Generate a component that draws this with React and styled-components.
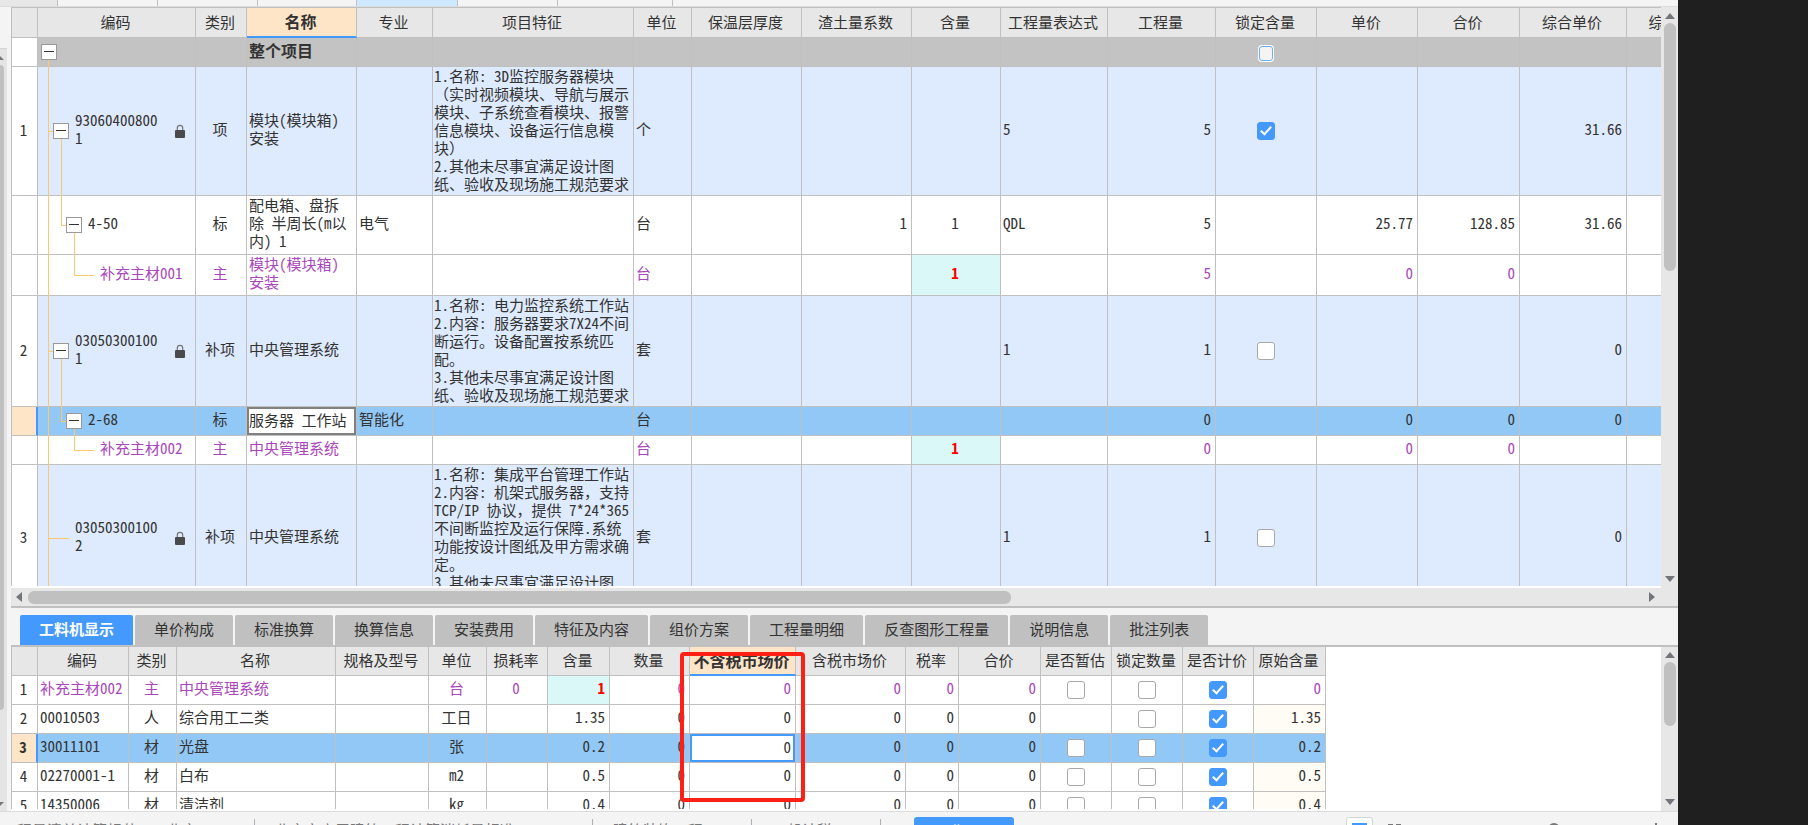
import React from "react";
import styled, { createGlobalStyle, css } from "styled-components";

const color = {
  line: "#c0c0c0",
  head: "#e7e7e7",
  panel: "#f4f4f4",
  accent: "#4499ff",
  selected: "#92c8f6",
  item: "#deeafd",
  peach: "#ffe5c7",
  purple: "#aa46bb",
  tree: "#ffc670",
};

const Global = createGlobalStyle`
  *, *::before, *::after { box-sizing: border-box; }
  body {
    margin: 0;
    background: #1f1f1f;
    color: #333;
    font: 15px/18px "Noto Sans CJK SC", sans-serif;
    font-feature-settings: "hwid" 1;
  }
  button, input { font: inherit; color: inherit; font-feature-settings: inherit; }
`;

const App = styled.div`
  display: flex;
  height: 100vh;
  overflow: hidden;
`;
const Backdrop = styled.aside`
  flex: 0 0 130px;
  background: #1f1f1f;
`;
const Window = styled.main`
  flex: 1;
  min-width: 0;
  display: flex;
  flex-direction: column;
  background: ${color.panel};
`;
const Body = styled.div`
  flex: 1;
  min-height: 0;
  display: flex;
`;
const Workspace = styled.div`
  flex: 1;
  min-width: 0;
  display: flex;
  flex-direction: column;
`;

const TopStrip = styled.div`
  display: flex;
  flex: 0 0 7px;
  border-bottom: 1px solid #dcdcdc;
`;
const TopTab = styled.span`
  width: ${(p) => p.$w}px;
  border-right: 1px solid ${color.line};
  background: ${(p) => p.$bg || color.panel};
`;

const SideRail = styled.div`
  flex: 0 0 11px;
  display: flex;
  flex-direction: column;
  margin-top: 1px;
  border-right: 4px solid ${color.panel};
  background: #e4e4e4;
`;
const RailHead = styled.div`
  height: 41px;
  background: ${color.panel};
  border-bottom: 1px solid #d4d4d4;
`;
const RailArrow = styled.span`
  width: 0;
  height: 0;
  margin: ${(p) => (p.$down ? "92px 0 0 -6px" : "6px 0 0 -6px")};
  border: 5px solid transparent;
  border-top: ${(p) => (p.$down ? "5px solid #73757d" : "0")};
  border-bottom: ${(p) => (p.$down ? "0" : "5px solid #73757d")};
`;
const RailThumb = styled.span`
  width: 4px;
  height: 645px;
  margin-top: 5px;
  border-radius: 0 4px 4px 0;
  background: ${color.line};
`;

const Pane = styled.section`
  display: flex;
  min-height: 0;
  flex: ${(p) => (p.$h ? `0 0 ${p.$h}px` : "1")};
`;
const Viewport = styled.div`
  position: relative;
  flex: 1;
  min-width: 0;
  overflow: hidden;
  border-top: ${(p) => (p.$flat ? "0" : `1px solid ${color.line}`)};
  border-bottom: 2px solid #fff;
  background: #fff;
`;

const Grid = styled.table`
  table-layout: fixed;
  width: ${(p) => p.$w}px;
  border-collapse: separate;
  border-spacing: 0;
  border-left: 1px solid ${color.line};
`;
const HeadCell = styled.th`
  height: ${(p) => p.$h}px;
  padding: 0 2px 2px 0;
  border-right: 1px solid ${color.line};
  border-bottom: 1px solid ${color.line};
  background: ${color.head};
  font-weight: 400;
  white-space: nowrap;
  ${(p) =>
    p.$active &&
    css`
      background: ${color.peach};
      border-bottom: 2px solid ${color.accent};
      font-size: 16px;
      font-weight: 700;
    `}
`;
const Row = styled.tr`
  height: ${(p) => p.$h}px;
  color: ${(p) => (p.$purple ? color.purple : "inherit")};
  background: ${(p) => p.$bg || "#fff"};
`;
const Cell = styled.td`
  position: relative;
  height: inherit;
  padding: ${(p) => p.$pad || "0 4px 4px 2px"};
  border-right: 1px solid ${color.line};
  border-bottom: 1px solid ${color.line};
  text-align: ${(p) => p.$align || "left"};
  vertical-align: middle;
  white-space: pre;
  overflow: hidden;
  background: ${(p) => p.$bg || "transparent"};
  font-weight: ${(p) => (p.$bold ? 700 : 400)};
  ${(p) => p.$title && "font-size: 16px;"}
  ${(p) => p.$hot && "color: #f00;"}
`;
const IndexCell = styled(Cell)`
  padding: 0 2px 2px 0;
  text-align: center;
  color: #333;
  background: ${(p) => (p.$active ? color.peach : "#fff")};
  font-weight: ${(p) => (p.$active ? 700 : 400)};
  ${(p) => p.$active && `border-right: 2px solid ${color.accent};`}
`;
const TickCell = styled(Cell)`
  padding: 0 1px 1px 0;
  text-align: center;
`;
const TreeCell = styled(Cell)`
  padding: 0 0 1px;
  overflow: visible;
`;
const TreeRow = styled.div`
  position: relative;
  display: flex;
  align-items: center;
  padding-left: ${(p) => p.$indent}px;
  gap: 6px;
`;
const Toggle = styled.button`
  display: flex;
  align-items: center;
  justify-content: center;
  width: 16px;
  height: 16px;
  padding: 0;
  border: 1px solid #999;
  background: #fff;
  &::after {
    content: "";
    width: 10px;
    height: 1px;
    background: #333;
  }
`;
const Code = styled.span`
  width: 86px;
  padding-bottom: 3px;
  white-space: ${(p) => (p.$wrap ? "normal" : "nowrap")};
  word-break: break-all;
`;
const LockIcon = styled.svg`
  width: 10px;
  height: 14px;
  margin-left: 8px;
`;
/* Connector strokes lie over the row borders of the code column. */
const Connector = styled.span`
  position: absolute;
  background: ${color.tree};
`;
const Rail = styled(Connector)`
  left: ${(p) => p.$x}px;
  width: 1px;
  top: ${(p) => (p.$from === "mid" ? "50%" : "0")};
  bottom: ${(p) => (p.$to === "mid" ? "50%" : "-1px")};
`;
const Branch = styled(Connector)`
  left: ${(p) => p.$x}px;
  width: ${(p) => p.$w}px;
  top: 50%;
  height: 1px;
`;
/* Full-width punctuation keeps its width inside the half-width grid font. */
const Wide = styled.span`
  font-feature-settings: normal;
`;

const Tick = styled.input.attrs({ type: "checkbox" })`
  appearance: none;
  display: inline-flex;
  align-items: center;
  justify-content: center;
  width: 18px;
  height: 18px;
  margin: 0;
  border: 1px solid #a8a8a8;
  border-radius: 3px;
  background: #fff;
  vertical-align: middle;
  &:checked {
    border-color: ${color.accent};
    background: ${color.accent};
  }
  &:checked::after {
    content: "";
    width: 6px;
    height: 11px;
    margin-bottom: 3px;
    border: solid #fff;
    border-width: 0 2px 2px 0;
    transform: rotate(42deg);
  }
`;
const HeadTick = styled(Tick)`
  width: 14px;
  height: 15px;
  border: 1px solid #6aaeff;
  background: ${color.panel};
  box-shadow: 0 0 0 1px #fff;
`;
const CellInput = styled.input`
  display: block;
  width: 100%;
  height: ${(p) => p.$h}px;
  padding: 0 ${(p) => (p.$right ? 2 : 0)}px 4px;
  border: 2px solid ${(p) => (p.$right ? color.accent : "#808080")};
  border-radius: 0;
  outline: 0;
  background: #fff;
  text-align: ${(p) => (p.$right ? "right" : "left")};
`;

const VBar = styled.div`
  flex: 0 0 17px;
  display: flex;
  flex-direction: column;
  align-items: center;
  padding: ${(p) => p.$top}px 0 6px;
  background: ${color.head};
`;
const HBar = styled.div`
  flex: 0 0 20px;
  display: flex;
  align-items: center;
  padding: 0 23px 0 5px;
  background: ${color.head};
  border-bottom: 2px solid ${color.line};
`;
const Thumb = styled.span`
  border-radius: 6px;
  background: ${color.line};
  ${(p) =>
    p.$vertical
      ? css`width: 12px; height: ${p.$len}; margin: 4px 0 auto;`
      : css`height: 13px; width: ${p.$len}; margin: 0 auto 0 6px;`}
`;
const Arrow = styled.svg`
  flex: none;
  display: block;
  fill: #73757d;
`;

const TabBar = styled.div`
  flex: 0 0 39px;
  display: flex;
  gap: 2px;
  align-items: flex-end;
  padding: 7px 0 0 9px;
  border-bottom: 2px solid ${color.line};
`;
const Tab = styled.button`
  height: 30px;
  padding: 0 19px 2px;
  border: 0;
  border-radius: 2px 2px 0 0;
  background: ${(p) => (p.$active ? color.accent : color.line)};
  color: ${(p) => (p.$active ? "#fff" : "#333")};
  font-weight: ${(p) => (p.$active ? 700 : 400)};
  white-space: nowrap;
`;
const Highlight = styled.div`
  position: absolute;
  top: 5px;
  left: 669px;
  width: 125px;
  height: 150px;
  border: 4px solid #ff2015;
  border-radius: 4px;
  pointer-events: none;
`;

const StatusBar = styled.footer`
  flex: 0 0 14px;
  display: flex;
  align-items: flex-start;
  overflow: hidden;
  border-top: 1px solid #dcdcdc;
  background: ${color.panel};
`;
const Status = styled.span`
  flex: 0 0 ${(p) => p.$w}px;
  height: 22px;
  margin-top: 7px;
  padding: 2px 0 0 ${(p) => p.$pad || 20}px;
  border-right: 1px solid #aab0b8;
  color: #777;
  white-space: pre;
  overflow: hidden;
`;
const StatusButton = styled.button`
  width: 100px;
  height: 28px;
  margin: 5px auto 0 33px;
  border: 0;
  border-radius: 3px;
  background: ${color.accent};
  color: #fff;
`;
const ViewButton = styled.button`
  width: 27px;
  height: 28px;
  margin: 5px 13px 0 0;
  padding: 0 5px;
  border: 1px solid #d4d4d4;
  border-radius: 3px;
  background: #fff;
  &::before {
    content: "";
    display: block;
    height: 16px;
    border: 3px solid ${color.accent};
  }
`;
const StatusIcons = styled.svg`
  width: 292px;
  height: 14px;
  flex: none;
`;

const upperCols = [
  ["", 26], ["编码", 158], ["类别", 51], ["名称", 110], ["专业", 76], ["项目特征", 201],
  ["单位", 58], ["保温层厚度", 110], ["渣土量系数", 110], ["含量", 89], ["工程量表达式", 107],
  ["工程量", 108], ["锁定含量", 101], ["单价", 101], ["合价", 102], ["综合单价", 107], ["综合合价", 106],
];

const upperRows = [
  {
    h: 129, no: "1", level: 1, code: "930604008001", lock: true, kind: "项", name: "模块(模块箱)\n安装",
    feature: "1.名称: 3D监控服务器模块\n（实时视频模块、导航与展示\n模块、子系统查看模块、报警\n信息模块、设备运行信息模\n块）\n2.其他未尽事宜满足设计图\n纸、验收及现场施工规范要求",
    unit: "个", expr: "5", qty: "5", locked: true, total: "31.66",
  },
  {
    h: 59, level: 2, code: "4-50", kind: "标", name: "配电箱、盘拆\n除 半周长(m以\n内) 1", major: "电气",
    unit: "台", slag: "1", content: "1", expr: "QDL", qty: "5", price: "25.77", sum: "128.85", total: "31.66",
  },
  { h: 41, level: 3, code: "补充主材001", kind: "主", name: "模块(模块箱)\n安装", unit: "台", content: "1", qty: "5", price: "0", sum: "0" },
  {
    h: 111, no: "2", level: 1, code: "030503001001", lock: true, kind: "补项", name: "中央管理系统",
    feature: "1.名称: 电力监控系统工作站\n2.内容: 服务器要求7X24不间\n断运行。设备配置按系统匹\n配。\n3.其他未尽事宜满足设计图\n纸、验收及现场施工规范要求",
    unit: "套", expr: "1", qty: "1", locked: false, total: "0",
  },
  { h: 29, level: 2, selected: true, code: "2-68", kind: "标", name: "服务器 工作站", major: "智能化", unit: "台", qty: "0", price: "0", sum: "0", total: "0" },
  { h: 29, level: 3, code: "补充主材002", kind: "主", name: "中央管理系统", unit: "台", content: "1", qty: "0", price: "0", sum: "0" },
  {
    h: 145, no: "3", level: 1, leaf: true, code: "030503001002", lock: true, kind: "补项", name: "中央管理系统",
    feature: "1.名称: 集成平台管理工作站\n2.内容: 机架式服务器，支持\nTCP/IP 协议，提供 7*24*365\n不间断监控及运行保障.系统\n功能按设计图纸及甲方需求确\n定。\n3.其他未尽事宜满足设计图\n纸、验收及现场施工规范要求",
    unit: "套", expr: "1", qty: "1", locked: false, total: "0",
  },
];

const lowerCols = [
  ["", 26], ["编码", 91], ["类别", 48], ["名称", 159], ["规格及型号", 93], ["单位", 58],
  ["损耗率", 61], ["含量", 62], ["数量", 80], ["不含税市场价", 106], ["含税市场价", 110], ["税率", 53],
  ["合价", 82], ["是否暂估", 71], ["锁定数量", 71], ["是否计价", 71], ["原始含量", 72],
];

const lowerRows = [
  { code: "补充主材002", kind: "主", name: "中央管理系统", unit: "台", loss: "0", content: "1", origin: "0", main: true, estimate: true },
  { code: "00010503", kind: "人", name: "综合用工二类", unit: "工日", content: "1.35", origin: "1.35" },
  { code: "30011101", kind: "材", name: "光盘", unit: "张", content: "0.2", origin: "0.2", selected: true, estimate: true },
  { code: "02270001-1", kind: "材", name: "白布", unit: "m2", content: "0.5", origin: "0.5", estimate: true },
  { code: "14350006", kind: "材", name: "清洁剂", unit: "kg", content: "0.4", origin: "0.4", estimate: true },
];

const tabs = [
  "工料机显示", "单价构成", "标准换算", "换算信息", "安装费用", "特征及内容",
  "组价方案", "工程量明细", "反查图形工程量", "说明信息", "批注列表",
];

const indents = { 0: 3, 1: 15, 2: 28, 3: 62 };

const sumWidths = (cols) => cols.reduce((total, [, w]) => total + w, 1);

function Columns({ cols }) {
  return (
    <colgroup>
      {cols.map(([label, w], i) => (
        <col key={label + i} style={{ width: w }} />
      ))}
    </colgroup>
  );
}

function Header({ cols, active, height }) {
  return (
    <thead>
      <tr>
        {cols.map(([label], i) => (
          <HeadCell key={label + i} $h={height} $active={label === active} scope="col">
            {label}
          </HeadCell>
        ))}
      </tr>
    </thead>
  );
}

function Feature({ text = "" }) {
  return text
    .split(/([（），])/)
    .map((part, i) => (i % 2 ? <Wide key={i}>{part}</Wide> : part));
}

function Lock() {
  return (
    <LockIcon viewBox="0 0 10 14" aria-label="已锁定">
      <path d="M2.3 7V4a2.7 2.7 0 0 1 5.4 0v3" fill="none" stroke="#777" strokeWidth="1.2" />
      <rect y="6" width="10" height="8" rx="1" fill="#4a4a4a" />
    </LockIcon>
  );
}

function Connectors({ level, leaf }) {
  return (
    <>
      <Rail $x={10} $from={level === 0 ? "mid" : "top"} />
      {level === 1 && <Branch $x={10} $w={leaf ? 21 : 6} />}
      {level === 1 && !leaf && <Rail $x={23} $from="mid" />}
      {level === 2 && <Rail $x={23} $to="mid" />}
      {level === 2 && <Branch $x={23} $w={6} />}
      {level === 2 && <Rail $x={36} $from="mid" />}
      {level === 3 && <Rail $x={36} $to="mid" />}
      {level === 3 && <Branch $x={36} $w={20} />}
    </>
  );
}

function ItemRow({ row }) {
  const isMain = row.level === 3;
  const bg = row.selected ? color.selected : row.level === 1 ? color.item : "#fff";
  return (
    <Row $h={row.h} $bg={bg} $purple={isMain}>
      <IndexCell $active={row.selected}>{row.no}</IndexCell>
      <TreeCell>
        <Connectors level={row.level} leaf={row.leaf} />
        <TreeRow $indent={row.leaf ? 37 : indents[row.level]}>
          {!isMain && !row.leaf && <Toggle aria-label="折叠" />}
          <Code $wrap={row.lock}>{row.code}</Code>
          {row.lock && <Lock />}
        </TreeRow>
      </TreeCell>
      <Cell $align="center">{row.kind}</Cell>
      {row.selected ? (
        <Cell $pad="0">
          <CellInput $h={28} aria-label="名称" defaultValue={row.name} />
        </Cell>
      ) : (
        <Cell>{row.name}</Cell>
      )}
      <Cell>{row.major}</Cell>
      <Cell $pad="0 1px 2px"><Feature text={row.feature} /></Cell>
      <Cell>{row.unit}</Cell>
      <Cell />
      <Cell $align="right">{row.slag}</Cell>
      <Cell $align="center" $bold={isMain} $hot={isMain} $bg={isMain ? "#daf8f8" : undefined}>{row.content}</Cell>
      <Cell>{row.expr}</Cell>
      <Cell $align="right">{row.qty}</Cell>
      <TickCell>
        {row.locked !== undefined && <Tick aria-label="锁定含量" defaultChecked={row.locked} />}
      </TickCell>
      <Cell $align="right">{row.price}</Cell>
      <Cell $align="right">{row.sum}</Cell>
      <Cell $align="right">{row.total}</Cell>
      <Cell />
    </Row>
  );
}

function ItemGrid() {
  return (
    <Grid $w={sumWidths(upperCols)}>
      <Columns cols={upperCols} />
      <Header cols={upperCols} active="名称" height={30} />
      <tbody>
        <Row $h={29} $bg="#c3c3c3">
          <IndexCell />
          <TreeCell>
            <Connectors level={0} />
            <TreeRow $indent={indents[0]}><Toggle aria-label="折叠" /></TreeRow>
          </TreeCell>
          <Cell />
          <Cell $bold $title>整个项目</Cell>
          {upperCols.slice(4).map(([label]) => (
            <TickCell key={label}>
              {label === "锁定含量" && <HeadTick aria-label="全部锁定含量" />}
            </TickCell>
          ))}
        </Row>
        {upperRows.map((row) => <ItemRow key={row.code} row={row} />)}
      </tbody>
    </Grid>
  );
}

function ResourceGrid() {
  return (
    <Grid $w={sumWidths(lowerCols)}>
      <Columns cols={lowerCols} />
      <Header cols={lowerCols} active="不含税市场价" height={29} />
      <tbody>
        {lowerRows.map((row, i) => (
          <Row key={row.code} $h={29} $bg={row.selected ? color.selected : "#fff"} $purple={row.main}>
            <IndexCell $active={row.selected}>{i + 1}</IndexCell>
            <Cell>{row.code}</Cell>
            <Cell $align="center">{row.kind}</Cell>
            <Cell>{row.name}</Cell>
            <Cell />
            <Cell $align="center">{row.unit}</Cell>
            <Cell $align="center">{row.loss}</Cell>
            <Cell $align="right" $bold={row.main} $hot={row.main} $bg={row.main ? "#daf8f8" : undefined}>{row.content}</Cell>
            <Cell $align="right">0</Cell>
            {row.selected ? (
              <Cell $pad="0">
                <CellInput $h={28} $right aria-label="不含税市场价" defaultValue="0" />
              </Cell>
            ) : (
              <Cell $align="right">0</Cell>
            )}
            <Cell $align="right">0</Cell>
            <Cell $align="right">0</Cell>
            <Cell $align="right">0</Cell>
            <TickCell>{row.estimate && <Tick aria-label="是否暂估" />}</TickCell>
            <TickCell><Tick aria-label="锁定数量" /></TickCell>
            <TickCell><Tick aria-label="是否计价" defaultChecked /></TickCell>
            <Cell $align="right" $bg={row.main || row.selected ? undefined : "#fffbf5"}>{row.origin}</Cell>
          </Row>
        ))}
      </tbody>
    </Grid>
  );
}

function VerticalBar({ top, length }) {
  return (
    <VBar $top={top}>
      <Arrow width="10" height="6"><path d="M0 6 5 0l5 6z" /></Arrow>
      <Thumb $vertical $len={length} />
      <Arrow width="10" height="6"><path d="M0 0h10L5 6z" /></Arrow>
    </VBar>
  );
}

export default function CostEstimator() {
  return (
    <App>
      <Global />
      <Window>
        <TopStrip>
          <TopTab $w={58} $bg="#e7e7e7" />
          <TopTab $w={100} />
          <TopTab $w={100} />
          <TopTab $w={99} />
          <TopTab $w={101} $bg="#cde8ff" />
          <TopTab $w={100} />
          <TopTab $w={115} />
        </TopStrip>
        <Body>
          <SideRail>
            <RailHead />
            <RailArrow />
            <RailThumb />
            <RailArrow $down />
          </SideRail>
          <Workspace>
            <Pane>
              <Viewport><ItemGrid /></Viewport>
              <VerticalBar top={6} length="248px" />
            </Pane>
            <HBar>
              <Arrow width="6" height="10"><path d="M6 0v10L0 5z" /></Arrow>
              <Thumb $len="60%" />
              <Arrow width="6" height="10"><path d="M0 0v10l6-5z" /></Arrow>
            </HBar>
            <TabBar role="tablist">
              {tabs.map((label, i) => (
                <Tab key={label} role="tab" aria-selected={i === 0} $active={i === 0}>{label}</Tab>
              ))}
            </TabBar>
            <Pane $h={164}>
              <Viewport $flat>
                <ResourceGrid />
                <Highlight />
              </Viewport>
              <VerticalBar top={5} length="64px" />
            </Pane>
          </Workspace>
        </Body>
        <StatusBar>
          <Status $w={255} $pad={2}>工程量清单计算规范    北京</Status>
          <Status $w={338}>北京市房屋建筑工程计算消耗量标准</Status>
          <Status $w={159}>建筑装饰工程</Status>
          <Status $w={129}>一般计税</Status>
          <StatusButton>费用</StatusButton>
          <ViewButton aria-label="表格视图" />
          <StatusIcons viewBox="0 0 292 14" fill="none" stroke="#777" strokeWidth="2">
            <path d="M2 13h5M10 13h5M270 11v3" />
            <circle cx="168" cy="17" r="5" />
          </StatusIcons>
        </StatusBar>
      </Window>
      <Backdrop />
    </App>
  );
}
